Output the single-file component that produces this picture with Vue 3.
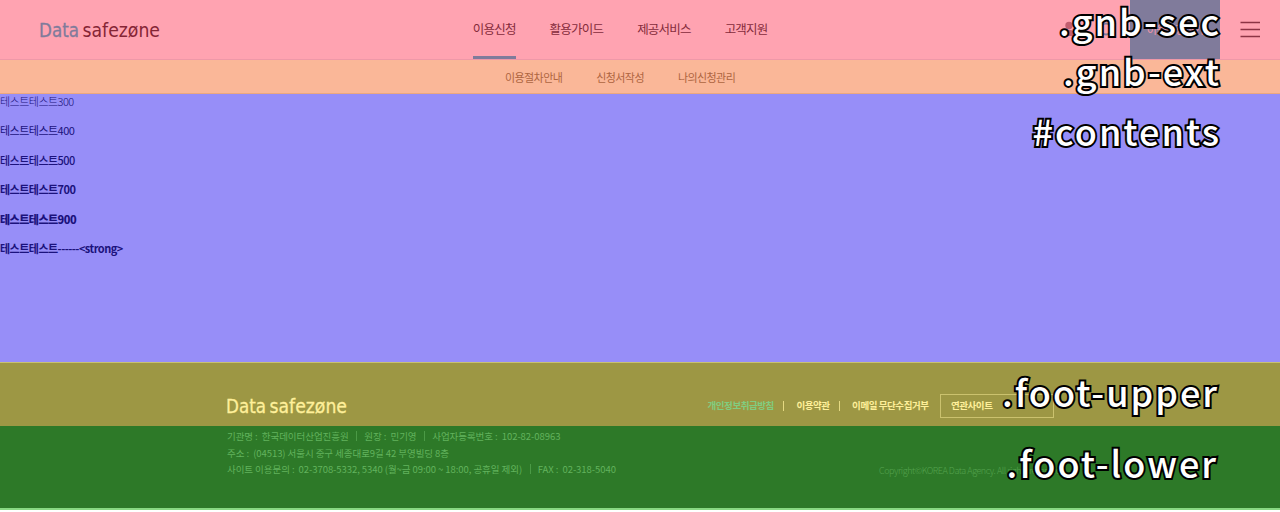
<script setup>
const menu = [
  { label: '이용신청', active: true },
  { label: '활용가이드' },
  { label: '제공서비스' },
  { label: '고객지원' },
]
const sub = ['이용절차안내', '신청서작성', '나의신청관리']
const tests = [300, 400, 500, 700, 900]
const labels = [
  { text: '.gnb-sec', cls: 'l1' },
  { text: '.gnb-ext', cls: 'l2' },
  { text: '#contents', cls: 'l3' },
  { text: '.foot-upper', cls: 'l4' },
  { text: '.foot-lower', cls: 'l5' },
]
</script>

<template>
  <div class="page">
    <header class="gnb-sec">
      <svg class="logo" width="128" height="32" viewBox="0 0 128 32">
        <text class="data" x="0" y="21" textLength="40" lengthAdjust="spacingAndGlyphs">Data</text>
        <text class="safe" x="43.5" y="21" textLength="77.5" lengthAdjust="spacingAndGlyphs">safezøne</text>
      </svg>
      <nav class="menu">
        <a v-for="m in menu" :key="m.label" :class="{ active: m.active }">{{ m.label }}</a>
      </nav>
      <div class="tools">
        <svg class="user" width="16" height="24" viewBox="0 0 16 24"><circle cx="8" cy="7.5" r="3.7" /><path d="M2 18v-1a5 5 0 0 1 5-5h2a5 5 0 0 1 5 5v1z" /></svg>
        <svg class="search" width="20" height="24" viewBox="0 0 20 24"><circle cx="9" cy="11" r="5.5" /><path d="M13 15l4 4" /></svg>
        <a class="portal">이용신청하기</a>
        <svg class="burger" width="60" height="59" viewBox="0 0 60 59"><path d="M20.5 22.5H40M20.5 29.5H40M20.5 36.5H40" /></svg>
      </div>
    </header>
    <nav class="gnb-ext">
      <a v-for="s in sub" :key="s">{{ s }}</a>
    </nav>
    <main class="contents">
      <p v-for="t in tests" :key="t" :class="'w' + t">테스트테스트{{ t }}</p>
      <p class="w700">테스트테스트------&lt;strong&gt;</p>
    </main>
    <section class="foot-upper">
      <svg class="logo" width="128" height="32" viewBox="0 0 128 32">
        <text class="data" x="0" y="21" textLength="40" lengthAdjust="spacingAndGlyphs">Data</text>
        <text class="safe" x="43.5" y="21" textLength="77.5" lengthAdjust="spacingAndGlyphs">safezøne</text>
      </svg>
      <div class="links">
        <a class="privacy">개인정보취급방침</a><i></i><a>이용약관</a><i></i><a>이메일 무단수집거부</a>
      </div>
      <div class="related">연관사이트</div>
    </section>
    <footer class="foot-lower">
      <div class="info">
        <p><span>기관명 :&nbsp; 한국데이터산업진흥원</span><i></i><span>원장 :&nbsp; 민기영</span><i></i><span>사업자등록번호 :&nbsp; 102-82-08963</span></p>
        <p><span>주소 :&nbsp; (04513) 서울시 중구 세종대로9길 42 부영빌딩 8층</span></p>
        <p><span>사이트 이용문의 :&nbsp; 02-3708-5332, 5340 (월~금 09:00 ~ 18:00, 공휴일 제외)</span><i></i><span>FAX :&nbsp; 02-318-5040</span></p>
      </div>
      <div class="copy">Copyright©KOREA Data Agency. All rights reserved.</div>
    </footer>
    <span v-for="l in labels" :key="l.text" class="label" :class="l.cls">{{ l.text }}</span>
  </div>
</template>

<style>
body { background: #fff; }
</style>

<style scoped>
.page { position: relative; width: 1280px; height: 512px; overflow: hidden; font-family: "Noto Sans CJK KR", sans-serif; font-size: 11px; }
p { margin: 0; }
a, span { white-space: nowrap; }
.gnb-sec { box-sizing: border-box; height: 60px; background: #ffa3b1; border-bottom: 1px solid #ee98a8; display: flex; }
.logo { font-family: "DejaVu Sans", sans-serif; font-size: 19.5px; flex: none; overflow: visible; }
.gnb-sec .logo { margin: 16px 0 0 38.5px; }
.gnb-sec .data { fill: #807b9b; stroke: #807b9b; stroke-width: 0.3; }
.gnb-sec .safe { fill: #852535; }
.menu { display: flex; gap: 34px; margin-left: 306.3px; width: 300px; flex: none; }
.menu a { box-sizing: border-box; height: 59px; line-height: 58px; font-size: 12.5px; letter-spacing: -0.8px; color: #852b3b; }
.menu .active { border-bottom: 3px solid #807b9b; }
.tools { display: flex; margin-left: auto; align-items: center; height: 59px; }
.user { fill: #c25f70; margin-right: 20px; }
.search { fill: none; stroke: #807b9b; stroke-width: 1.8; margin-right: 13px; }
.portal { width: 90px; height: 59px; line-height: 58px; text-align: center; background: #807b9b; color: #f395a8; font-size: 11px; letter-spacing: -0.7px; }
.burger { stroke: #8c3445; stroke-width: 1.3; }
.gnb-ext { box-sizing: border-box; height: 34px; background: #fab798; border-bottom: 1px solid #eba77f; padding-left: 505px; display: flex; gap: 34px; line-height: 34px; font-size: 11px; letter-spacing: -0.58px; color: #ae6540; }
.contents { height: 268px; background: #978ef8; color: #1b127c; }
.contents p { height: 29.4px; line-height: 15.2px; font-size: 11px; letter-spacing: -0.52px; }
.contents .w300 { font-weight: 300; }
.contents .w500 { font-weight: 500; }
.contents .w700 { font-weight: 700; }
.contents .w900 { font-weight: 900; }
.foot-upper { box-sizing: border-box; height: 64px; background: #9d9744; border-top: 1px solid #c8c171; display: flex; font-weight: 700; color: #fff09a; }
.foot-upper .logo { margin: 29px 0 0 225.5px; fill: #fff09a; stroke: #fff09a; stroke-width: 0.3; font-weight: 400; }
.links { display: flex; margin-left: 354px; width: 232.5px; height: 16px; margin-top: 34px; line-height: 16px; font-size: 9.5px; letter-spacing: -0.44px; flex: none; }
.links i { width: 1px; height: 10px; background: #e5d982; margin: 4px 12px 0 9.5px; }
.privacy { color: #80cd80; }
.related { box-sizing: border-box; width: 114px; height: 24px; margin-top: 31px; border: 1px solid #cbc26e; padding-left: 10px; line-height: 20px; font-size: 9.5px; letter-spacing: -0.45px; }
.foot-lower { box-sizing: border-box; height: 84px; background: #2d7928; border-bottom: 2px solid #88d982; display: flex; color: #62b35d; }
.info { margin-left: 227px; width: 652px; flex: none; padding-top: 2px; }
.info p { display: flex; height: 16.7px; line-height: 16.6px; font-size: 9.5px; letter-spacing: -0.06px; }
.info i { width: 1px; height: 10px; background: #4b9a46; margin: 3px 7px 0 7.7px; }
.copy { margin-top: 37px; line-height: 16px; font-size: 9px; font-weight: 300; letter-spacing: -0.45px; color: #55a34f; }
.label { position: absolute; right: 59px; font-size: 36px; line-height: 48px; font-weight: 500; color: #fff; letter-spacing: 2px; -webkit-text-stroke: 4px #000; paint-order: stroke fill; }
.l1 { top: -4px; }
.l2 { top: 46px; }
.l3 { top: 106px; }
.l4 { top: 367px; right: 61px; }
.l5 { top: 438px; right: 62px; }
</style>
